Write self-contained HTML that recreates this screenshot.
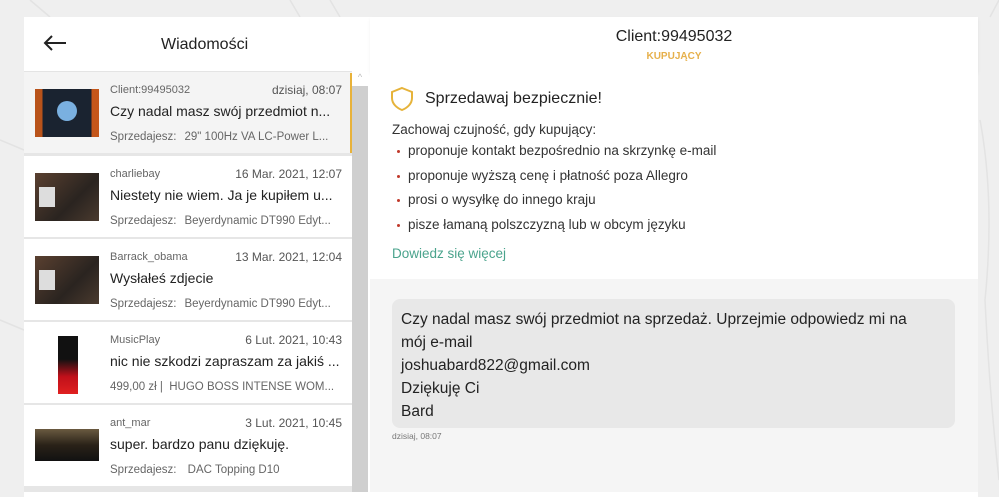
<!DOCTYPE html>
<html><head><meta charset="utf-8"><style>
*{box-sizing:border-box;margin:0;padding:0}
body{width:999px;height:492px;overflow:hidden;background:#efefef;font-family:"Liberation Sans",sans-serif;color:#222;position:relative}
.card{position:absolute;left:24px;top:17px;width:954px;height:480px;background:#fff}
.hdrL{position:absolute;left:24px;top:17px;width:328px;height:55px;background:#fff;border-bottom:1px solid #e4e4e4}
.hdrR{position:absolute;left:370px;top:17px;width:608px;height:55px;background:#fff;box-shadow:0 2px 3px rgba(0,0,0,.06)}
.list{position:absolute;left:24px;top:72px;width:328px;height:420px;background:#e6e6e6}
.item{position:absolute;left:0;width:328px;height:81px;background:#fff}
.item .th{position:absolute;left:11px;top:17px;width:64px;height:48px}
.item .u{position:absolute;left:86px;top:12px;font-size:11px;color:#666}
.item .d{position:absolute;right:10px;top:11px;font-size:12px;color:#555}
.item .m{position:absolute;left:86px;top:31px;font-size:14px;color:#222;white-space:nowrap}
.item .s{position:absolute;left:86px;top:59px;font-size:11.5px;color:#666;white-space:nowrap}
.item .s b{font-weight:normal;margin-right:8px}
.scroll{position:absolute;left:352px;top:72px;width:16px;height:420px;background:#cfcfcf}
.right{position:absolute;left:370px;top:72px;width:608px;height:420px;background:#f5f5f5}
.safe{position:absolute;left:370px;top:72px;width:608px;height:207px;background:#fff}
ul{list-style:none}
li{position:relative;padding-left:13px;height:24.5px}
li:before{content:"";position:absolute;left:2px;top:7px;width:3px;height:3px;background:#c0392b;border-radius:50%}
</style></head><body>
<svg style="position:absolute;left:0;top:0" width="999" height="492"><g stroke="#e3e3e3" stroke-width="1.5" fill="none"><path d="M30 0 L50 17"/><path d="M290 0 L300 17"/><path d="M330 0 L340 17"/><path d="M0 140 L24 150"/><path d="M0 320 L24 330"/><path d="M980 120 Q995 200 985 300 Q990 400 999 480"/><path d="M990 17 L999 0"/></g></svg>
<div class="card"></div>
<div class="hdrL">
<svg style="position:absolute;left:18px;top:16px" width="26" height="20" viewBox="0 0 26 20"><path d="M24 10H3M10 3L3 10L10 17" stroke="#222" stroke-width="2" fill="none"/></svg>
<div style="position:absolute;left:137px;top:19px;font-size:16px;color:#222">Wiadomości</div>
</div>
<div class="hdrR">
<div style="position:absolute;left:0;width:608px;top:11px;text-align:center;font-size:16px;color:#222">Client:99495032</div>
<div style="position:absolute;left:0;width:608px;top:34px;text-align:center;font-size:10px;font-weight:bold;color:#e6b04b">KUPUJĄCY</div>
</div>
<div class="list">
<div class="item" style="top:0;background:#f4f4f4">
<div class="th" style="background:linear-gradient(90deg,#b9531a 0 12%,#1a2330 12% 88%,#c4561a 88%);"><div style="position:absolute;left:22px;top:12px;width:20px;height:20px;border-radius:50%;background:#7ab0e0"></div></div>
<div class="u">Client:99495032</div><div class="d">dzisiaj, 08:07</div>
<div class="m">Czy nadal masz swój przedmiot n...</div>
<div class="s"><b>Sprzedajesz:</b>29" 100Hz VA LC-Power L...</div>
<div style="position:absolute;left:326px;top:1px;width:4px;height:80px;background:#e8b23a"></div>
</div>
<div class="item" style="top:84px">
<div class="th" style="background:linear-gradient(135deg,#5a4030,#2a2420 60%,#4a3a2e);"><div style="position:absolute;left:4px;top:14px;width:16px;height:20px;background:#ddd"></div></div>
<div class="u">charliebay</div><div class="d">16 Mar. 2021, 12:07</div>
<div class="m">Niestety nie wiem. Ja je kupiłem u...</div>
<div class="s"><b>Sprzedajesz:</b>Beyerdynamic DT990 Edyt...</div>
</div>
<div class="item" style="top:167px">
<div class="th" style="background:linear-gradient(135deg,#5a4030,#2a2420 60%,#4a3a2e);"><div style="position:absolute;left:4px;top:14px;width:16px;height:20px;background:#ddd"></div></div>
<div class="u">Barrack_obama</div><div class="d">13 Mar. 2021, 12:04</div>
<div class="m">Wysłałeś zdjecie</div>
<div class="s"><b>Sprzedajesz:</b>Beyerdynamic DT990 Edyt...</div>
</div>
<div class="item" style="top:250px">
<div style="position:absolute;left:34px;top:14px;width:20px;height:58px;background:linear-gradient(#111 0 40%,#c0101a 70%,#e02020)"></div>
<div class="u">MusicPlay</div><div class="d">6 Lut. 2021, 10:43</div>
<div class="m">nic nie szkodzi zapraszam za jakiś ...</div>
<div class="s">499,00 zł | &nbsp;HUGO BOSS INTENSE WOM...</div>
</div>
<div class="item" style="top:333px">
<div class="th" style="top:24px;height:32px;background:linear-gradient(#6a5a40,#2a2218 50%,#111)"></div>
<div class="u">ant_mar</div><div class="d">3 Lut. 2021, 10:45</div>
<div class="m">super. bardzo panu dziękuję.</div>
<div class="s"><b>Sprzedajesz:</b>&nbsp;DAC Topping D10</div>
</div>
</div>
<div class="scroll"><div style="position:absolute;left:0;top:0;width:16px;height:14px;background:#fff;color:#bbb;font-size:9px;text-align:center">^</div></div>
<div class="right"></div>
<div class="safe">
<svg style="position:absolute;left:20px;top:14px" width="24" height="26" viewBox="0 0 24 26"><path d="M12 2L22 6V12C22 18 17 22 12 24C7 22 2 18 2 12V6Z" stroke="#e6b33a" stroke-width="2" fill="none"/></svg>
<div style="position:absolute;left:55px;top:18px;font-size:16px;color:#222">Sprzedawaj bezpiecznie!</div>
<div style="position:absolute;left:22px;top:50px;font-size:13.5px;color:#333">Zachowaj czujność, gdy kupujący:</div>
<ul style="position:absolute;left:25px;top:71px;font-size:13.5px;color:#333">
<li>proponuje kontakt bezpośrednio na skrzynkę e-mail</li>
<li>proponuje wyższą cenę i płatność poza Allegro</li>
<li>prosi o wysyłkę do innego kraju</li>
<li>pisze łamaną polszczyzną lub w obcym języku</li>
</ul>
<div style="position:absolute;left:22px;top:174px;font-size:13.5px;color:#4aa38c">Dowiedz się więcej</div>
</div>
<div style="position:absolute;left:392px;top:299px;width:563px;height:129px;background:#e8e8e8;border-radius:8px;padding:9px 9px;font-size:15.5px;line-height:23px;color:#222">Czy nadal masz swój przedmiot na sprzedaż. Uprzejmie odpowiedz mi na<br>mój e-mail<br>joshuabard822@gmail.com<br>Dziękuję Ci<br>Bard</div>
<div style="position:absolute;left:392px;top:431px;font-size:8.5px;color:#777">dzisiaj, 08:07</div>
</body></html>
